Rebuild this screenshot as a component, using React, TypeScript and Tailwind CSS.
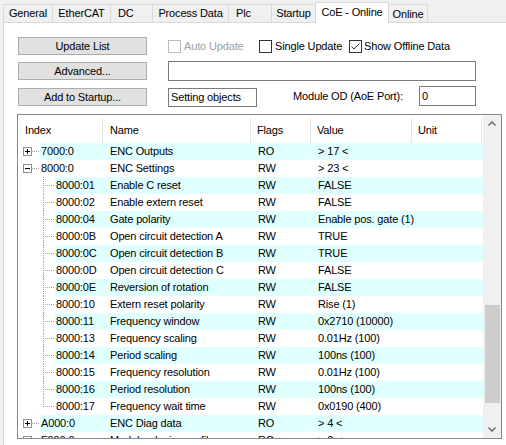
import React from "react";

type Row = {
  idx: string;
  name: string;
  flags: string;
  value: string;
  level: 0 | 1;
  open?: boolean;
  last?: boolean;
};

const rows: Row[] = [
  { idx: "7000:0", name: "ENC Outputs", flags: "RO", value: "> 17 <", level: 0 },
  { idx: "8000:0", name: "ENC Settings", flags: "RW", value: "> 23 <", level: 0, open: true },
  { idx: "8000:01", name: "Enable C reset", flags: "RW", value: "FALSE", level: 1 },
  { idx: "8000:02", name: "Enable extern reset", flags: "RW", value: "FALSE", level: 1 },
  { idx: "8000:04", name: "Gate polarity", flags: "RW", value: "Enable pos. gate (1)", level: 1 },
  { idx: "8000:0B", name: "Open circuit detection A", flags: "RW", value: "TRUE", level: 1 },
  { idx: "8000:0C", name: "Open circuit detection B", flags: "RW", value: "TRUE", level: 1 },
  { idx: "8000:0D", name: "Open circuit detection C", flags: "RW", value: "FALSE", level: 1 },
  { idx: "8000:0E", name: "Reversion of rotation", flags: "RW", value: "FALSE", level: 1 },
  { idx: "8000:10", name: "Extern reset polarity", flags: "RW", value: "Rise (1)", level: 1 },
  { idx: "8000:11", name: "Frequency window", flags: "RW", value: "0x2710 (10000)", level: 1 },
  { idx: "8000:13", name: "Frequency scaling", flags: "RW", value: "0.01Hz (100)", level: 1 },
  { idx: "8000:14", name: "Period scaling", flags: "RW", value: "100ns (100)", level: 1 },
  { idx: "8000:15", name: "Frequency resolution", flags: "RW", value: "0.01Hz (100)", level: 1 },
  { idx: "8000:16", name: "Period resolution", flags: "RW", value: "100ns (100)", level: 1 },
  { idx: "8000:17", name: "Frequency wait time", flags: "RW", value: "0x0190 (400)", level: 1, last: true },
  { idx: "A000:0", name: "ENC Diag data", flags: "RO", value: "> 4 <", level: 0 },
  { idx: "F000:0", name: "Modular device profile", flags: "RO", value: "> 2 <", level: 0 },
];

const tabs = [
  { label: "General", w: "w-[49px]", pad: "text-center" },
  { label: "EtherCAT", w: "w-[58px]", pad: "text-center" },
  { label: "DC", w: "w-[42px]", pad: "pl-[7px]" },
  { label: "Process Data", w: "w-[76px]", pad: "text-center" },
  { label: "Plc", w: "w-[43px]", pad: "pl-[7px]" },
  { label: "Startup", w: "w-[44px]", pad: "text-center" },
];

function RootGlyph({ open }: { open?: boolean }) {
  return (
    <svg width="22" height="17" className="shrink-0 block">
      <rect x="5.5" y="4.5" width="8" height="8" fill="#fff" stroke="#919191" />
      <line x1="7" y1="8.5" x2="12" y2="8.5" stroke="#000" />
      {!open && <line x1="9.5" y1="6" x2="9.5" y2="11" stroke="#000" />}
      <line x1="14" y1="8.5" x2="22" y2="8.5" stroke="#a0a0a0" strokeDasharray="1 1" />
    </svg>
  );
}

function ChildGlyph({ last }: { last?: boolean }) {
  return (
    <svg width="37" height="17" className="shrink-0 block">
      <line x1="25.5" y1="0" x2="25.5" y2={last ? 9 : 17} stroke="#a0a0a0" strokeDasharray="1 1" />
      <line x1="27" y1="8.5" x2="36" y2="8.5" stroke="#a0a0a0" strokeDasharray="1 1" />
    </svg>
  );
}

function Checkbox({ checked, disabled }: { checked?: boolean; disabled?: boolean }) {
  return (
    <div
      className={`w-[13px] h-[13px] shrink-0 border bg-white ${
        disabled ? "border-[#bcbcbc]" : "border-[#333333]"
      }`}
    >
      {checked && (
        <svg width="11" height="11" className="block">
          <polyline points="1.5,5.5 4,8 9.5,2.5" fill="none" stroke="#333" strokeWidth="1" />
        </svg>
      )}
    </div>
  );
}

function Button({ children }: { children: React.ReactNode }) {
  return (
    <div className="w-[129px] h-[18px] shrink-0 border border-[#adadad] bg-[#e1e1e1] text-center leading-[16px]">
      {children}
    </div>
  );
}

export default function App() {
  return (
    <div className="w-[506px] h-[445px] overflow-hidden bg-[#f0f0f0] flex flex-col text-[11px] tracking-[-0.15px] text-black font-['Liberation_Sans',Arial,sans-serif]">
      {/* tab strip */}
      <div className="flex h-[22px] items-end pl-[3px] shrink-0">
        {tabs.map((t) => (
          <div
            key={t.label}
            className={`${t.w} ${t.pad} h-[18px] border-t border-l border-[#d9d9d9] bg-[#f0f0f0] leading-[17px] whitespace-nowrap`}
          >
            {t.label}
          </div>
        ))}
        <div className="relative z-10 w-[74px] h-[21px] -mb-px border-t border-l border-r border-[#d9d9d9] bg-white text-center leading-[19px] whitespace-nowrap">
          CoE - Online
        </div>
        <div className="w-[39px] h-[18px] border-t border-r border-[#d9d9d9] bg-[#f0f0f0] text-center leading-[19px]">
          Online
        </div>
      </div>

      {/* page */}
      <div className="flex-1 ml-[3px] border-t border-l border-[#d9d9d9] bg-white pl-[14px] pt-[14px] flex flex-col">
        <div className="flex items-center h-[18px]">
          <Button>Update List</Button>
          <div className="ml-[21px] w-[91px] flex items-center">
            <Checkbox disabled />
            <span className="ml-[3px] text-[#a0a0a0]">Auto Update</span>
          </div>
          <div className="w-[90px] flex items-center">
            <Checkbox />
            <span className="ml-[3px]">Single Update</span>
          </div>
          <div className="flex items-center">
            <Checkbox checked />
            <span className="ml-[2px]">Show Offline Data</span>
          </div>
        </div>

        <div className="flex items-center h-[18px] mt-[7px]">
          <Button>Advanced...</Button>
          <div className="ml-[21px] w-[308px] h-[20px] border border-[#7a7a7a] bg-white" />
        </div>

        <div className="flex items-center h-[18px] mt-[8px]">
          <Button>Add to Startup...</Button>
          <div className="ml-[21px] w-[89px] h-[19px] border border-[#7a7a7a] bg-white pl-[2px] leading-[17px] whitespace-nowrap">
            Setting objects
          </div>
          <div className="ml-[36px] w-[126px] whitespace-nowrap mb-[2px]">Module OD (AoE Port):</div>
          <div className="w-[57px] h-[20px] border border-[#7a7a7a] bg-white pl-[2px] leading-[18px] mb-[3px]">
            0
          </div>
        </div>

        {/* object list */}
        <div className="mt-[8px] -ml-px w-[485px] h-[325px] border border-[#828790] bg-white flex overflow-hidden">
          <div className="w-[465px] flex flex-col overflow-hidden">
            <div className="flex h-[28px] shrink-0 pt-[3px]">
              <div className="w-[85px] border-r border-[#e5e5e5] pl-[7px] flex items-center">Index</div>
              <div className="w-[148px] border-r border-[#e5e5e5] pl-[7px] flex items-center">Name</div>
              <div className="w-[60px] border-r border-[#e5e5e5] pl-[6px] flex items-center">Flags</div>
              <div className="w-[101px] border-r border-[#e5e5e5] pl-[6px] flex items-center">Value</div>
              <div className="w-[70px] border-r border-[#e5e5e5] pl-[6px] flex items-center">Unit</div>
            </div>
            {rows.map((r, i) => (
              <div key={r.idx} className="flex h-[17px] shrink-0 leading-[17px] whitespace-nowrap">
                {r.level === 0 ? <RootGlyph open={r.open} /> : <ChildGlyph last={r.last} />}
                <div className={`flex flex-1 ${i % 2 === 0 ? "bg-[#e0ffff]" : ""}`}>
                  <div className={`${r.level === 0 ? "w-[63px]" : "w-[48px]"} pl-[1px]`}>{r.idx}</div>
                  <div className="w-[148px] pl-[7px]">{r.name}</div>
                  <div className="w-[60px] pl-[7px]">{r.flags}</div>
                  <div className="w-[101px] pl-[7px]">{r.value}</div>
                </div>
              </div>
            ))}
          </div>
          {/* scroll bar */}
          <div className="w-[18px] bg-[#f0f0f0] flex flex-col">
            <div className="h-[17px] flex items-center justify-center">
              <svg width="8" height="5" className="block">
                <polyline points="0.5,4.5 4,1 7.5,4.5" fill="none" stroke="#606060" strokeWidth="1.3" />
              </svg>
            </div>
            <div className="flex-1 flex flex-col">
              <div className="mt-[173px] ml-[2px] w-[15px] h-[98px] bg-[#cdcdcd]" />
            </div>
            <div className="h-[17px] flex items-center justify-center">
              <svg width="8" height="5" className="block">
                <polyline points="0.5,0.5 4,4 7.5,0.5" fill="none" stroke="#606060" strokeWidth="1.3" />
              </svg>
            </div>
          </div>
        </div>
      </div>
    </div>
  );
}
